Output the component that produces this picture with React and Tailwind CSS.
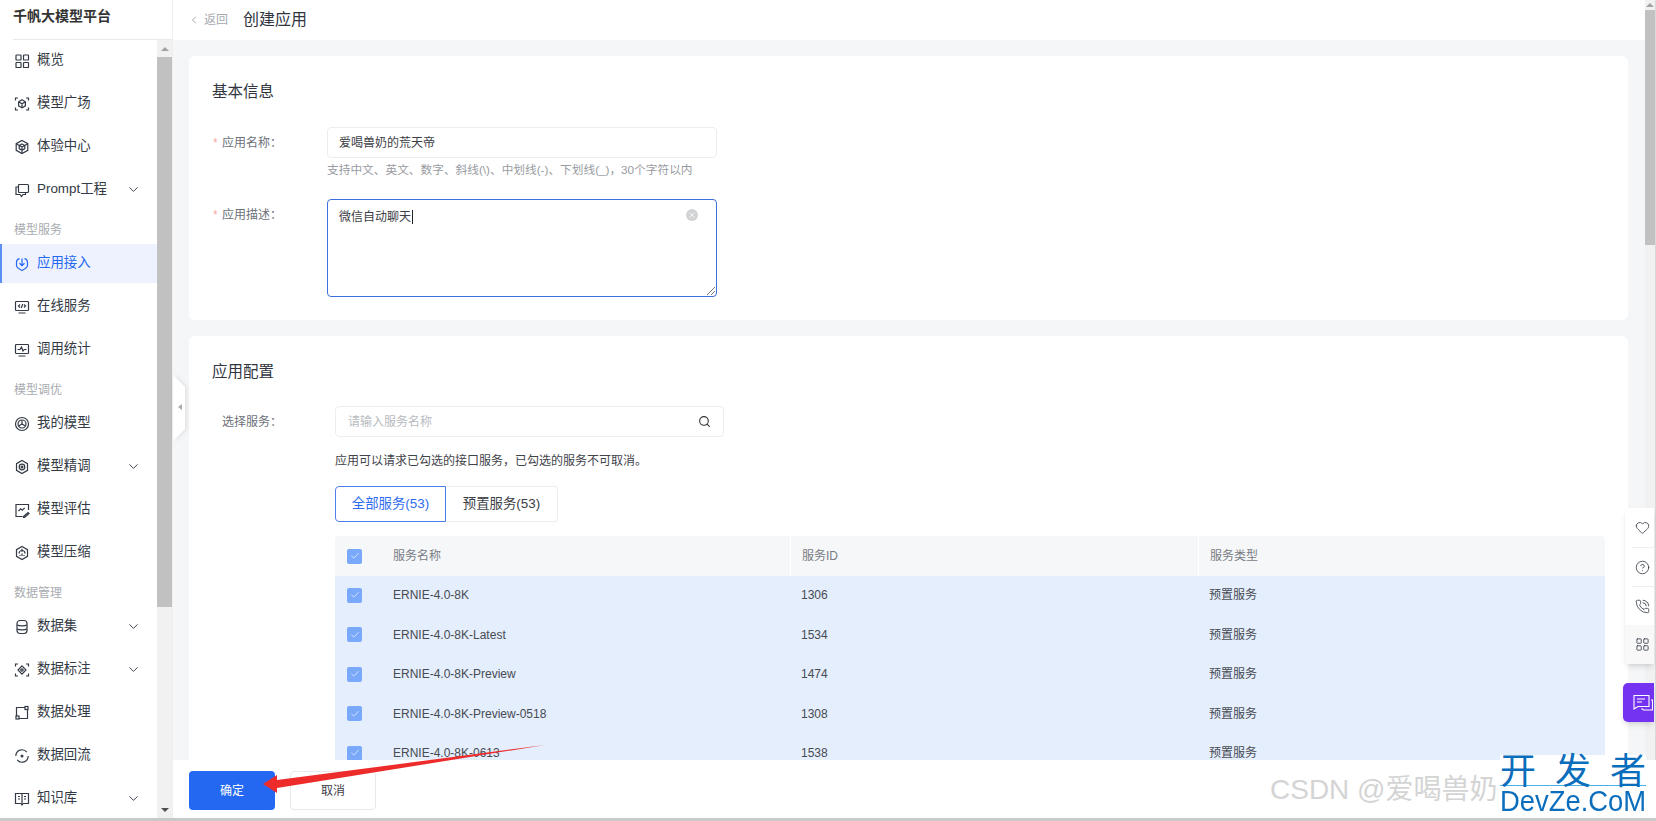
import { ChevronDown, ChevronLeft, Search, Check, X, Heart, CircleHelp, PhoneCall, LayoutGrid } from 'lucide-react'

const font = 'font-["Liberation_Sans","Noto_Sans_CJK_SC",sans-serif]'

// sidebar icons, drawn on a 16x16 box
const paths = {
  grid: <><rect x="2" y="2" width="5" height="5" rx=".6" /><rect x="9.5" y="2" width="5" height="5" rx=".6" /><rect x="2" y="9.5" width="5" height="5" rx=".6" /><rect x="9.5" y="9.5" width="5" height="5" rx=".6" /></>,
  scanBox: <><path d="M1.5 4.5V2h2.5M12 2h2.5v2.5M14.5 11.5V14H12M4 14H1.5v-2.5" /><path d="M8 3.8l3.4 2v4L8 11.9 4.6 9.8v-4zM4.6 5.8L8 7.8l3.4-2M8 7.8v4.1" /></>,
  cube: <><path d="M8 1.5l5.8 3.2v6.6L8 14.5l-5.8-3.2V4.7z" /><path d="M8 5l2.8 1.6v3L8 11.2 5.2 9.6v-3zM2.2 4.7L8 8l5.8-3.3M8 8v6.5" /></>,
  prompt: <><rect x="4.5" y="2.5" width="10" height="8" rx="1" /><path d="M4.5 5H2v7.5h4l1.5 2 1.5-2h2.5v-2" /></>,
  download: <><path d="M5.5 2.6C3.5 3 2.5 4.5 2.5 6.5v3c0 2 3.5 4 5.5 5 2-1 5.5-3 5.5-5v-3c0-2-1-3.5-3-3.9" /><path d="M8 2.5v7M5.5 7.2L8 9.6l2.5-2.4" /></>,
  code: <><rect x="1.5" y="2.5" width="13" height="9" rx=".8" /><path d="M4.5 14h7M6 5.5L4.5 7 6 8.5M10 5.5L11.5 7 10 8.5M8.7 5l-1.4 4" /></>,
  chart: <><rect x="1.5" y="2.5" width="13" height="9" rx=".8" /><path d="M4.5 14h7M3.5 7.5h2.5l1.5-2.5 1.5 4 1.2-1.5h2.3" /></>,
  target: <><circle cx="8" cy="8" r="6.5" /><circle cx="8" cy="8" r="4" /><path d="M8 8V4.5M8 8l-3 1.8M8 8l3 1.8" /></>,
  hex: <><path d="M8 1.5l5.5 3.2v6.6L8 14.5l-5.5-3.2V4.7z" /><circle cx="8" cy="8" r="2.8" /><circle cx="8" cy="8" r=".9" /></>,
  evaluate: <><path d="M8.5 14.5H2V2.5h12.5V8" /><path d="M4.5 9l2.2-2.2 1.6 1.4 2.4-2.4M9.5 14.5l4.5-4 1 1-4.5 4h-1z" /></>,
  compress: <><path d="M8 1.5l5.5 3.2v6.6L8 14.5l-5.5-3.2V4.7z" /><path d="M5 8.5a3 3 0 0 1 6 0M8 3.8v3M6 11v-1M8 11V8.5M10 11v-1" /></>,
  db: <><rect x="3" y="1.5" width="10" height="13" rx="3" /><path d="M3 6c2 1.2 8 1.2 10 0M3 10c2 1.2 8 1.2 10 0" /></>,
  label: <><path d="M1.5 4.5V2h2.5M12 2h2.5v2.5M14.5 11.5V14H12M4 14H1.5v-2.5" /><path d="M8 3.8L12 8l-4 4.2L4 8z" /><circle cx="8" cy="8" r="1.2" /></>,
  process: <><path d="M11 2.5H2.5V11M13.5 5v8.5H5" /><rect x="11" y="1.5" width="3" height="3" /><rect x="2" y="11" width="3" height="3" /></>,
  flow: <><path d="M1.8 8a6.2 6.2 0 0 1 11-3.9M14.2 8a6.2 6.2 0 0 1-11 3.9" /><circle cx="8" cy="8" r=".9" /></>,
  book: <><path d="M1.5 2.5h13v10H9.2L8 14l-1.2-1.5H1.5zM8 2.5v10M4 5.5h2M4 8h2M10 5.5h2M10 8h2" /></>,
}

function NavIcon({ name }) {
  return (
    <svg width="16" height="16" viewBox="0 0 16 16" fill="none" stroke="currentColor" strokeWidth="1.2">
      {paths[name]}
    </svg>
  )
}

const nav = [
  { icon: 'grid', label: '概览' },
  { icon: 'scanBox', label: '模型广场' },
  { icon: 'cube', label: '体验中心' },
  { icon: 'prompt', label: 'Prompt工程', more: true },
  { section: '模型服务' },
  { icon: 'download', label: '应用接入', active: true },
  { icon: 'code', label: '在线服务' },
  { icon: 'chart', label: '调用统计' },
  { section: '模型调优' },
  { icon: 'target', label: '我的模型' },
  { icon: 'hex', label: '模型精调', more: true },
  { icon: 'evaluate', label: '模型评估' },
  { icon: 'compress', label: '模型压缩' },
  { section: '数据管理' },
  { icon: 'db', label: '数据集', more: true },
  { icon: 'label', label: '数据标注', more: true },
  { icon: 'process', label: '数据处理' },
  { icon: 'flow', label: '数据回流' },
  { icon: 'book', label: '知识库', more: true },
]

const rows = [
  ['ERNIE-4.0-8K', '1306'],
  ['ERNIE-4.0-8K-Latest', '1534'],
  ['ERNIE-4.0-8K-Preview', '1474'],
  ['ERNIE-4.0-8K-Preview-0518', '1308'],
  ['ERNIE-4.0-8K-0613', '1538'],
]

function Sidebar() {
  return (
    <div className="w-[173px] shrink-0 flex flex-col bg-white border-r border-[#eeeeee]">
      <div className="h-[40px] shrink-0 ml-[13px] flex items-center border-b border-[#e8e9eb] pb-[6px] text-[14px] font-bold text-[#333333]">
        千帆大模型平台
      </div>
      <div className="flex flex-1 min-h-0">
        <div className="w-[157px] overflow-hidden -mt-[1px] flex flex-col">
          {nav.map((item) =>
            item.section ? (
              <div key={item.section} className="h-[31px] shrink-0 pt-[7px] pl-[14px] flex items-center text-[12px] text-[#a8abb0]">
                {item.section}
              </div>
            ) : (
              <div
                key={item.label}
                className={
                  item.active
                    ? 'h-[39px] shrink-0 my-[2px] pl-[12px] pr-[16px] flex items-center text-[13.4px] bg-[#eef2fe] text-[#2468f2] border-l-2 border-[#5b8ff5]'
                    : 'h-[39px] shrink-0 my-[2px] pl-[14px] pr-[16px] flex items-center text-[13.4px] text-[#333a45]'
                }
              >
                <NavIcon name={item.icon} />
                <span className="ml-[7px] flex-1">{item.label}</span>
                {item.more && <ChevronDown size={15} strokeWidth={1.5} />}
              </div>
            )
          )}
        </div>
        <div className="w-[15px] flex flex-col bg-[#f1f1f1]">
          <div className="h-[17px] flex items-center justify-center">
            <div className="border-x-[4px] border-x-transparent border-b-[4px] border-b-[#a3a3a3]" />
          </div>
          <div className="h-[550px] bg-[#c1c1c1]" />
          <div className="flex-1 flex items-end justify-center pb-[6px]">
            <div className="border-x-[4px] border-x-transparent border-t-[4px] border-t-[#505050]" />
          </div>
        </div>
      </div>
    </div>
  )
}

function Checkbox() {
  return (
    <span className="w-[15px] h-[15px] rounded-[2px] bg-[#7aa8fb] flex items-center justify-center text-white">
      <Check size={10} strokeWidth={1.6} />
    </span>
  )
}

function Label({ children }) {
  return (
    <div className="w-[115px] pl-[1px] text-[12px] text-[#6d7178] flex items-center">
      <span className="w-[9px] text-[#f3a89c]">*</span>
      {children}
    </div>
  )
}

function Card({ title, className, children }) {
  return (
    <div className={'bg-white rounded-[6px] pl-[23px] pr-[23px] ' + className}>
      <h2 className="text-[15.5px] font-normal text-[#303540] leading-[20px]">{title}</h2>
      {children}
    </div>
  )
}

function Cells({ name, id, type, sep }) {
  return (
    <>
      <div className="w-[58px] pl-[12px]"><Checkbox /></div>
      <div className="w-[397px]">{name}</div>
      <div className={'w-[408px] h-full flex items-center pl-[11px] ' + (sep ? 'border-l border-[#ffffff]' : '')}>{id}</div>
      <div className={'flex-1 h-full flex items-center pl-[11px] ' + (sep ? 'border-l border-[#ffffff]' : '')}>{type}</div>
    </>
  )
}

function Form() {
  return (
    <div className="flex-1 min-w-0 pl-[16px] pr-[17px] pt-[16px]">
      <Card title="基本信息" className="h-[264px] pt-[26px]">
        <div className="flex mt-[25px]">
          <div className="h-[31px] flex items-center"><Label>应用名称：</Label></div>
          <div>
            <div className="w-[390px] h-[31px] border border-[#ecedef] rounded-[4px] pl-[11px] flex items-center text-[12px] text-[#3c4046]">
              爱喝兽奶的荒天帝
            </div>
            <div className="mt-[4px] text-[11.7px] text-[#989ba1] leading-[16px]">
              支持中文、英文、数字、斜线(\)、中划线(-)、下划线(_)，30个字符以内
            </div>
          </div>
        </div>
        <div className="flex mt-[21px]">
          <div className="h-[31px] flex items-center"><Label>应用描述：</Label></div>
          <div className="relative w-[390px] h-[98px] border border-[#3f6fdc] rounded-[4px] pl-[11px] pt-[9px] text-[12px] leading-[16px] text-[#3c4046]">
            <span className="border-r border-[#222222] pr-[0.5px]">微信自动聊天</span>
            <span className="absolute right-[18px] top-[9px] w-[12px] h-[12px] rounded-full bg-[#d2d3d5] flex items-center justify-center text-white">
              <X size={8} strokeWidth={2.4} />
            </span>
            <svg className="absolute right-[1px] bottom-[1px]" width="8" height="8" viewBox="0 0 8 8" stroke="#555555" strokeWidth=".8">
              <path d="M0 8L8 0M4 8L8 4" />
            </svg>
          </div>
        </div>
      </Card>
      <Card title="应用配置" className="h-[600px] mt-[16px] pt-[26px]">
        <div className="flex mt-[24px]">
          <div className="h-[31px] w-[123px] pl-[10px] flex items-center text-[12px] text-[#6d7178]">选择服务：</div>
          <div className="flex-1 min-w-0">
            <div className="w-[389px] h-[31px] border border-[#ecedef] rounded-[4px] px-[12px] flex items-center justify-between text-[12px] text-[#b8bbc0]">
              请输入服务名称
              <Search size={13} className="text-[#333333]" />
            </div>
            <p className="mt-[16px] text-[12px] leading-[16px] text-[#3f434a]">应用可以请求已勾选的接口服务，已勾选的服务不可取消。</p>
            <div className="flex mt-[17px] text-[13.4px] h-[36px]">
              <div className="w-[111px] flex items-center justify-center border border-[#4f80ea] rounded-l-[4px] text-[#2f6df0]">全部服务(53)</div>
              <div className="w-[112px] flex items-center justify-center border border-l-0 border-[#ecedef] rounded-r-[4px] text-[#3c4046]">预置服务(53)</div>
            </div>
            <div className="mt-[14px] text-[12px]">
              <div className="h-[40px] flex items-center bg-[#f6f7f9] rounded-t-[4px] text-[#797d84]">
                <Cells name="服务名称" id="服务ID" type="服务类型" sep />
              </div>
              {rows.map((r) => (
                <div key={r[1]} className="h-[39.5px] flex items-center bg-[#e4eefd] text-[#474b52] border-b border-[#e2ecfc]">
                  <Cells name={r[0]} id={r[1]} type="预置服务" />
                </div>
              ))}
            </div>
          </div>
        </div>
      </Card>
    </div>
  )
}

function Main() {
  return (
    <div className="flex-1 min-w-0 flex flex-col">
      <div className="flex-1 min-h-0 flex">
        <div className="flex-1 min-w-0 flex flex-col">
          <div className="h-[40px] shrink-0 bg-white flex items-center pl-[15px]">
            <ChevronLeft size={12} className="text-[#a6a9ae]" />
            <span className="ml-[4px] text-[12px] text-[#a6a9ae]">返回</span>
            <span className="ml-[15px] text-[16px] text-[#303540]">创建应用</span>
          </div>
          <div className="flex-1 min-h-0 bg-[#f5f6f8] overflow-hidden">
            <Form />
          </div>
        </div>
        <div className="w-[11px] shrink-0 bg-[#f1f1f1] border-r border-[#d9d9d9] flex flex-col">
          <div className="h-[10px] flex items-center justify-center">
            <div className="border-x-[4px] border-x-transparent border-b-[4px] border-b-[#a3a3a3]" />
          </div>
          <div className="h-[235px] bg-[#c1c1c1]" />
        </div>
      </div>
      <div className="h-[58px] shrink-0 pt-[3px] bg-white flex items-center pl-[16px] gap-[15px] text-[12px]">
        <button className="w-[86px] h-[39px] rounded-[4px] bg-[#2468f2] text-white">确定</button>
        <button className="w-[86px] h-[39px] rounded-[4px] border border-[#e8e9eb] text-[#3c4046]">取消</button>
      </div>
    </div>
  )
}

function Floating() {
  return (
    <>
      {/* collapse handle */}
      <svg className="absolute left-[173px] top-[375px] drop-shadow-[2px_0_2px_rgba(0,0,0,0.08)]" width="14" height="66" viewBox="0 0 14 66">
        <path d="M0 0L12 12V54L0 66Z" fill="#ffffff" />
        <path d="M9 29l-4 3 4 3z" fill="#a8abb0" />
      </svg>
      {/* right tools */}
      <div className="absolute left-[1625px] top-[508px] w-[29px] bg-white rounded-l-[6px] shadow-md text-[#333a45] flex flex-col">
        <div className="h-[39px] pl-[10px] flex items-center"><Heart size={15} strokeWidth={1.3} /></div>
        <div className="h-[39px] ml-[7px] pl-[3px] border-t border-[#eeeeee] flex items-center"><CircleHelp size={15} strokeWidth={1.3} /></div>
        <div className="h-[39px] ml-[7px] pl-[3px] border-t border-[#eeeeee] flex items-center"><PhoneCall size={15} strokeWidth={1.3} /></div>
        <div className="h-[39px] pl-[10px] bg-[#f8f8f9] flex items-center"><LayoutGrid size={15} strokeWidth={1.3} /></div>
      </div>
      <div className="absolute left-[1623px] top-[683px] w-[31px] h-[39px] pl-[10px] bg-[#7433f0] rounded-l-[5px] shadow-md flex items-center">
        <svg width="20" height="18" viewBox="0 0 20 18" fill="none" stroke="#ffffff" strokeWidth="1.1">
          <path d="M1 1.5h15v11H5l-4 2.5zM4 5h8M4 8h5M18 6h1.5v10h-9l-2-1.5" />
        </svg>
      </div>
      {/* screenshot annotation */}
      <svg className="absolute left-[255px] top-[738px]" width="300" height="60" viewBox="0 0 300 60">
        <path d="M8 46L22 37L22 42L290 7L22 50L22 55Z" fill="#ee2b2b" />
      </svg>
      {/* blog watermark */}
      <div className="absolute left-[1270px] top-[773px] w-[230px] overflow-hidden text-[28px] leading-[34px] whitespace-nowrap text-[#d4d4d4]">CSDN @爱喝兽奶</div>
      <div className="absolute left-[1500px] top-[755px] w-[146px] h-[60px] bg-white text-[#0a6ebd]">
        <div className="h-[31px] flex justify-between text-[36px] leading-[34px] border-b border-[#4ab0e8]">
          <span>开</span><span>发</span><span>者</span>
        </div>
        <div className="text-[27.4px] leading-[28px] whitespace-nowrap origin-top scale-y-[1.1]">DevZe.CoM</div>
      </div>
    </>
  )
}

export default function App() {
  return (
    <div className={'relative w-[1656px] h-[821px] overflow-hidden bg-white flex flex-col ' + font}>
      <div className="flex flex-1 min-h-0">
        <Sidebar />
        <Main />
      </div>
      <div className="h-[3px] shrink-0 bg-[#c9c9c9]" />
      <Floating />
    </div>
  )
}
